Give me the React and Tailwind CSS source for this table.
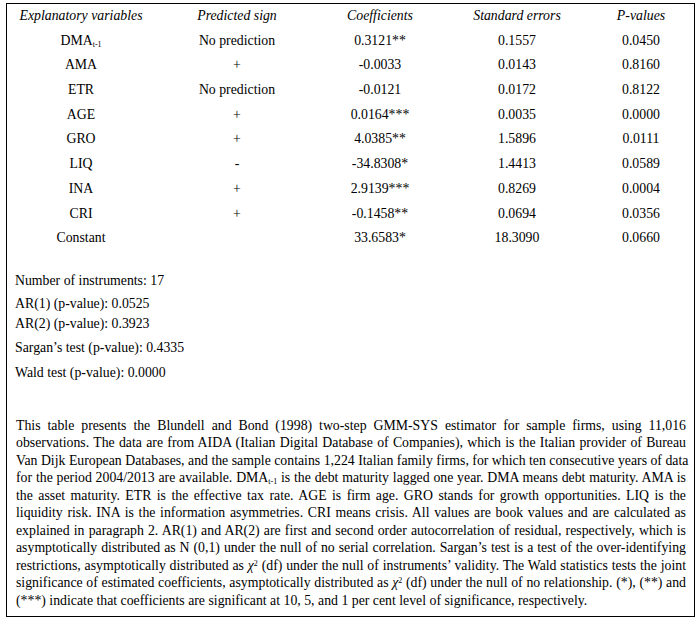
const rows = [
  { v: 'DMA', sub: 't-1', sign: 'No prediction', coef: '0.3121**', se: '0.1557', p: '0.0450' },
  { v: 'AMA', sign: '+', coef: '-0.0033', se: '0.0143', p: '0.8160' },
  { v: 'ETR', sign: 'No prediction', coef: '-0.0121', se: '0.0172', p: '0.8122' },
  { v: 'AGE', sign: '+', coef: '0.0164***', se: '0.0035', p: '0.0000' },
  { v: 'GRO', sign: '+', coef: '4.0385**', se: '1.5896', p: '0.0111' },
  { v: 'LIQ', sign: '-', coef: '-34.8308*', se: '1.4413', p: '0.0589' },
  { v: 'INA', sign: '+', coef: '2.9139***', se: '0.8269', p: '0.0004' },
  { v: 'CRI', sign: '+', coef: '-0.1458**', se: '0.0694', p: '0.0356' },
  { v: 'Constant', sign: '', coef: '33.6583*', se: '18.3090', p: '0.0660' },
]

const cols = 'grid grid-cols-[148px_164px_122px_152px_96px] h-[24.7px] items-center text-center'

const Chi = () => (
  <>
    <i>χ</i>
    <sup className="text-[8px]">2</sup>
  </>
)

export default function App() {
  const para = [
    <>This table presents the Blundell and Bond (1998) two-step GMM-SYS estimator for sample firms, using 11,016</>,
    <>observations. The data are from AIDA (Italian Digital Database of Companies), which is the Italian provider of Bureau</>,
    <>Van Dijk European Databases, and the sample contains 1,224 Italian family firms, for which ten consecutive years of data</>,
    <>
      for the period 2004/2013 are available. DMA<sub className="text-[8px]">t-1</sub> is the debt maturity lagged one year. DMA means debt maturity. AMA is
    </>,
    <>the asset maturity. ETR is the effective tax rate. AGE is firm age. GRO stands for growth opportunities. LIQ is the</>,
    <>liquidity risk. INA is the information asymmetries. CRI means crisis. All values are book values and are calculated as</>,
    <>explained in paragraph 2. AR(1) and AR(2) are first and second order autocorrelation of residual, respectively, which is</>,
    <>asymptotically distributed as N (0,1) under the null of no serial correlation. Sargan’s test is a test of the over-identifying</>,
    <>
      restrictions, asymptotically distributed as <Chi /> (df) under the null of instruments’ validity. The Wald statistics tests the joint
    </>,
    <>
      significance of estimated coefficients, asymptotically distributed as <Chi /> (df) under the null of no relationship. (*), (**) and
    </>,
  ]
  return (
    <div className="min-h-screen bg-white pt-[3px] pl-[6px] text-black" style={{ fontFamily: '"Liberation Serif", "Times New Roman", serif' }}>
      <div className="w-[689px] h-[614px] border border-black text-[13.8px]">
        <div>
          <div className={cols + ' italic'}>
            <div>Explanatory variables</div>
            <div>Predicted sign</div>
            <div>Coefficients</div>
            <div>Standard errors</div>
            <div>P-values</div>
          </div>
          {rows.map((r) => (
            <div key={r.v} className={cols}>
              <div>
                {r.v}
                {r.sub && <sub className="text-[8px]">{r.sub}</sub>}
              </div>
              <div>{r.sign}</div>
              <div>{r.coef}</div>
              <div>{r.se}</div>
              <div>{r.p}</div>
            </div>
          ))}
        </div>
        <div className="pl-[8px] leading-[18px]">
          <div className="mt-[21px]">Number of instruments: 17</div>
          <div className="mt-[5px]">AR(1) (p-value): 0.0525</div>
          <div className="mt-[2px]">AR(2) (p-value): 0.3923</div>
          <div className="mt-[6px]">Sargan’s test (p-value): 0.4335</div>
          <div className="mt-[7px]">Wald test (p-value): 0.0000</div>
        </div>
        <div className="mt-[35px] pl-[9px] w-[679px] leading-[17.5px]">
          {para.map((l, i) => (
            <div key={i} className="text-justify [text-align-last:justify] whitespace-nowrap">
              {l}
            </div>
          ))}
          <div>(***) indicate that coefficients are significant at 10, 5, and 1 per cent level of significance, respectively.</div>
        </div>
      </div>
    </div>
  )
}
